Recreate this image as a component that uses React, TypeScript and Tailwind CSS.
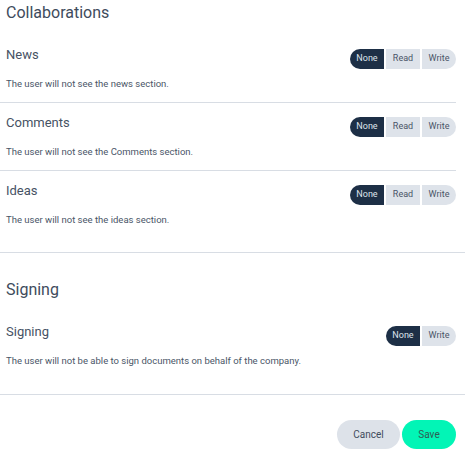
import React from "react";

type Opt = "None" | "Read" | "Write";

function Segments({ options, value }: { options: Opt[]; value: Opt }) {
  return (
    <div className="flex gap-[2px]">
      {options.map((o, i) => {
        const first = i === 0;
        const last = i === options.length - 1;
        const active = o === value;
        return (
          <div
            key={o}
            className={
              "flex h-[20px] w-[34px] items-center justify-center text-[9px] " +
              (first ? "rounded-l-full " : "") +
              (last ? "rounded-r-full " : "") +
              (active ? "bg-[#1d2f46] text-[#dfe4ec]" : "bg-[#dee3ea] text-[#4a5567]")
            }
          >
            {o}
          </div>
        );
      })}
    </div>
  );
}

function Row({
  label,
  desc,
  options,
  border,
}: {
  label: string;
  desc: string;
  options: Opt[];
  border: boolean;
}) {
  return (
    <div className={"flex flex-col pl-[6px] pt-[14px] pb-[12px] " + (border ? "border-b border-[#d8dde4]" : "")}>
      <div className="flex h-[20px] items-start justify-between">
        <div className="-mt-[2px] text-[13px] leading-[16px] text-[#465264]">{label}</div>
        <Segments options={options} value="None" />
      </div>
      <div className="mt-[9px] text-[9.5px] leading-[12px] text-[#4a5667]">{desc}</div>
    </div>
  );
}

export default function App() {
  return (
    <div className="w-[465px] bg-white" style={{ fontFamily: "Roboto, 'Noto Sans', sans-serif" }}>
      <section className="border-b border-[#d8dde4] pt-[3px] pb-[14px]">
        <h2 className="mb-[12px] pl-[6px] text-[16px] leading-[20px] text-[#3e4b5c]">Collaborations</h2>
        <div className="mr-[9px]">
          <Row label="News" desc="The user will not see the news section." options={["None", "Read", "Write"]} border />
          <Row label="Comments" desc="The user will not see the Comments section." options={["None", "Read", "Write"]} border />
          <Row label="Ideas" desc="The user will not see the ideas section." options={["None", "Read", "Write"]} border={false} />
        </div>
      </section>
      <section className="border-b border-[#d8dde4] pt-[27px] pb-[15px]">
        <h2 className="mb-[12px] pl-[6px] text-[16px] leading-[20px] text-[#3e4b5c]">Signing</h2>
        <div className="mr-[9px]">
          <Row
            label="Signing"
            desc="The user will not be able to sign documents on behalf of the company."
            options={["None", "Write"]}
            border={false}
          />
        </div>
      </section>
      <div className="flex justify-end gap-[2px] pt-[25px] pr-[9px] pb-[10px]">
        <button className="h-[29px] w-[63px] rounded-full bg-[#dde2e9] text-[10px] text-[#3f4b5c]">Cancel</button>
        <button className="h-[29px] w-[54px] rounded-full bg-[#02f5b6] text-[10px] text-[#2e5d55]">Save</button>
      </div>
    </div>
  );
}
